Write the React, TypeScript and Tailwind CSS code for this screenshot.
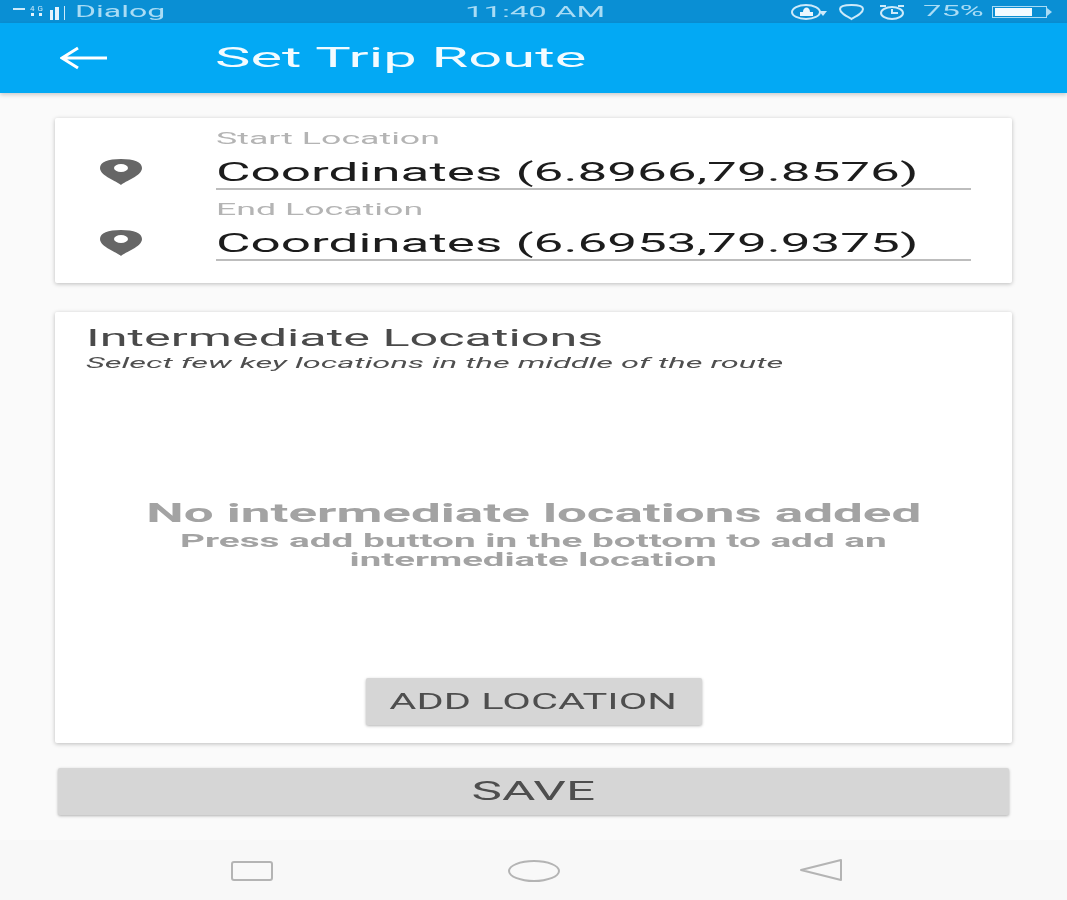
import React from "react";

const font = "font-['Roboto',sans-serif]";

const Pin = () => {
  return (
    <svg width="42" height="26" viewBox="0 0 42 26" className="block">
      <path
        d="M21 26 C17 22 0 17 0 9 C0 3 8 0 21 0 C34 0 42 3 42 9 C42 17 25 22 21 26 Z"
        fill="#666666"
      />
      <ellipse cx="21" cy="9" rx="7" ry="4" fill="#ffffff" />
    </svg>
  );
};

const LocationField = (props: { label: string; value: string }) => {
  return (
    <div className="flex">
      <div className="w-[161px] pl-[45px] pt-[33px]">
        <Pin />
      </div>
      <div className="w-[755px]">
        <div className="h-[24px] text-[17px] leading-[24px] text-[#b4b4b4] whitespace-nowrap">
          <span className="inline-block origin-left scale-x-[2.1]">{props.label}</span>
        </div>
        <div className="h-[40px] border-b-2 border-[#bdbdbd] text-[26px] leading-[44px] text-[#1c1c1c] whitespace-nowrap">
          <span className="inline-block origin-left scale-x-[2.04]">{props.value}</span>
        </div>
      </div>
    </div>
  );
};

const StatusBar = () => {
  return (
    <div className="h-[23px] bg-[#0a8fd4] flex items-center relative shrink-0 text-[#a9dcf5]">
      <div className="flex items-center pl-[13px]">
        <svg width="56" height="18" viewBox="0 0 56 18" className="block">
          <rect x="0" y="5" width="12" height="2" fill="#cdeafa" />
          <text x="17" y="8" fontSize="8" fill="#cdeafa" textLength="13">
            4G
          </text>
          <rect x="18" y="10" width="3" height="3" fill="#e3f4fd" />
          <rect x="26" y="10" width="3" height="3" fill="#e3f4fd" />
          <rect x="37" y="7" width="3" height="10" fill="#e3f4fd" />
          <rect x="42" y="4" width="4" height="13" fill="#e3f4fd" />
          <rect x="51" y="3" width="1" height="14" fill="#cdeafa" />
        </svg>
        <span className="ml-[6px] text-[16px] leading-[25px] origin-left scale-x-[2] inline-block whitespace-nowrap">
          Dialog
        </span>
      </div>
      <span className="absolute left-[465px] top-0 text-[15px] leading-[25px] origin-left scale-x-[2.19] whitespace-nowrap">
        11:40 AM
      </span>
      <div className="ml-auto flex items-center pr-[15px]">
        <svg width="36" height="18" viewBox="0 0 36 18" className="block">
          <ellipse cx="15" cy="9" rx="14" ry="7" fill="none" stroke="#cdeafa" strokeWidth="2" />
          <path d="M9 13 V9 H12 C12 3 19 3 19 9 H22 V13 Z" fill="#eaf7fe" />
          <path d="M28 8 H36 L32 13 Z" fill="#cdeafa" />
        </svg>
        <svg width="27" height="18" viewBox="0 0 27 18" className="block ml-[11px]">
          <path
            d="M13.5 16 C8 13 2 10 2 6 C2 3 7 2 13.5 2 C20 2 25 3 25 6 C25 10 19 13 13.5 16 Z"
            fill="none"
            stroke="#cdeafa"
            strokeWidth="2"
          />
        </svg>
        <svg width="28" height="18" viewBox="0 0 28 18" className="block ml-[13px]">
          <ellipse cx="14" cy="10" rx="11" ry="6" fill="none" stroke="#cdeafa" strokeWidth="2" />
          <path d="M2 3 H8 M20 3 H26 M14 6 V10 H20" fill="none" stroke="#cdeafa" strokeWidth="2" />
        </svg>
        <span className="ml-[17px] w-[58px] text-[15px] leading-[25px] whitespace-nowrap">
          <span className="inline-block origin-left scale-x-[2.18]">75%</span>
        </span>
        <div className="w-[55px] h-[12px] border border-[#a9dcf5] ml-[11px] flex pl-[2px] py-[1px]">
          <div className="w-[37px] bg-[#f2fbff]" />
        </div>
        <div className="w-0 h-0 border-y-[4px] border-y-transparent border-l-[5px] border-l-[#a9dcf5]" />
      </div>
    </div>
  );
};

const AppBar = () => {
  return (
    <div className="h-[70px] bg-[#03a9f4] flex items-center shrink-0 shadow-[0_2px_4px_rgba(0,0,0,0.18)] relative">
      <svg width="48" height="24" viewBox="0 0 48 24" className="block ml-[60px]">
        <path d="M47 12 H3 M18 2 L2 12 L18 22" fill="none" stroke="#ffffff" strokeWidth="3" />
      </svg>
      <span className="ml-[107px] text-[28px] leading-[38px] text-[#f2fbff] origin-left scale-x-[2.13] whitespace-nowrap">
        Set Trip Route
      </span>
    </div>
  );
};

const NavBar = () => {
  return (
    <div className="h-[60px] bg-[#f8f8f8] flex items-start justify-center gap-[235px] pl-[6px] pt-[19px] shrink-0">
      <div className="w-[42px] h-[20px] border-2 border-[#b4b4b4] rounded-[3px] mt-[2px]" />
      <div className="w-[52px] h-[22px] border-2 border-[#b4b4b4] rounded-[50%] mt-[1px]" />
      <svg width="44" height="24" viewBox="0 0 44 24" className="block ml-[4px] -mt-[1px]">
        <path
          d="M42 2 V22 L2 12 Z"
          fill="none"
          stroke="#b4b4b4"
          strokeWidth="2"
          strokeLinejoin="round"
        />
      </svg>
    </div>
  );
};

const App = () => {
  return (
    <div className="w-[1067px] h-[900px] bg-[#fafafa] overflow-hidden">
      <div className={`${font} h-full flex flex-col blur-[0.6px]`}>
        <StatusBar />
        <AppBar />
        <div className="flex-1 flex flex-col px-[55px] pt-[25px]">
          <div className="h-[165px] bg-white rounded-[2px] shadow-[0_1px_4px_rgba(0,0,0,0.25)] pt-[8px]">
            <LocationField label="Start Location" value="Coordinates (6.8966,79.8576)" />
            <div className="h-[7px]" />
            <LocationField label="End Location" value="Coordinates (6.6953,79.9375)" />
          </div>
          <div className="h-[431px] mt-[29px] bg-white rounded-[2px] shadow-[0_1px_4px_rgba(0,0,0,0.25)] flex flex-col pt-[13px]">
            <div className="pl-[31px] text-[23px] leading-[28px] text-[#4a4a4a] whitespace-nowrap">
              <span className="inline-block origin-left scale-x-[2.19]">Intermediate Locations</span>
            </div>
            <div className="pl-[31px] text-[15px] leading-[20px] italic text-[#4f4f4f] whitespace-nowrap">
              <span className="inline-block origin-left scale-x-[2.17]">
                Select few key locations in the middle of the route
              </span>
            </div>
            <div className="mt-[125px] flex flex-col items-center text-[#a3a3a3] font-bold whitespace-nowrap">
              <div className="text-[25px] leading-[32px] scale-x-[2.12]">
                No intermediate locations added
              </div>
              <div className="text-[18px] leading-[19px] mt-[1px] scale-x-[2.15]">
                Press add button in the bottom to add an
              </div>
              <div className="text-[18px] leading-[19px] scale-x-[2.13]">intermediate location</div>
            </div>
            <div className="mt-auto mb-[18px] flex justify-center">
              <button className="w-[336px] h-[47px] bg-[#d6d6d6] rounded-[2px] shadow-[0_1px_3px_rgba(0,0,0,0.3)] text-[#4e4e4e] text-[22px] leading-[47px]">
                <span className="inline-block scale-x-[1.89]">ADD LOCATION</span>
              </button>
            </div>
          </div>
          <button className="h-[47px] mx-[3px] mt-[25px] bg-[#d6d6d6] rounded-[2px] shadow-[0_1px_3px_rgba(0,0,0,0.3)] text-[#4e4e4e] text-[26px] leading-[47px]">
            <span className="inline-block scale-x-[1.97]">SAVE</span>
          </button>
        </div>
        <NavBar />
      </div>
    </div>
  );
};

export default App;
